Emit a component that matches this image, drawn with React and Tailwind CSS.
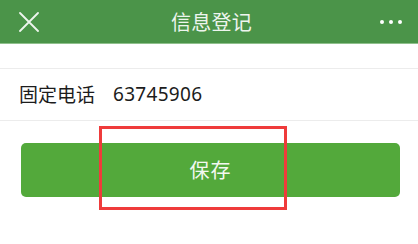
import React from 'react';

export default function App() {
    return (
        <div className="w-[418px] h-[244px] bg-white overflow-hidden" style={{ fontFamily: '"Noto Sans CJK SC", "Noto Sans", sans-serif' }}>
            {/* Top bar */}
            <div className="h-[44px] bg-[#4b9449] border-b border-[#8fc08c] flex items-center justify-between pl-[19px] pr-[16px]">
                <svg className="w-[20px] h-[20px]" viewBox="0 0 20 20" fill="none" stroke="#eef5ee" strokeWidth="1.8" strokeLinecap="round">
                    <path d="M1 1l18 18M19 1L1 19" />
                </svg>
                <div className="text-[20px] text-[#eef5ee] tracking-[0.3px] translate-x-[2px]">信息登记</div>
                <div className="flex gap-[5px] items-center">
                    <span className="w-[4px] h-[4px] rounded-full bg-white" />
                    <span className="w-[4px] h-[4px] rounded-full bg-white" />
                    <span className="w-[4px] h-[4px] rounded-full bg-white" />
                </div>
            </div>

            {/* Form row */}
            <div className="mt-[24px] h-[53px] border-y border-[#ececec] flex items-center px-[19px] gap-[18px] text-[#1c1c1c]">
                <span className="text-[19px]">固定电话</span>
                <span className="text-[19px] tracking-[0.3px]" style={{ fontFamily: '"Noto Sans", sans-serif' }}>63745906</span>
            </div>

            {/* Save button */}
            <div className="relative px-[21px] pt-[22px]">
                <button className="w-[379px] h-[54px] rounded-[5px] bg-[#53a93b] text-[20px] text-[#f2f8f0] tracking-[1px]">
                    保存
                </button>
                <div className="absolute left-[99px] top-[5px] w-[188px] h-[84px] border-[3px] border-[#ef3b3b]" />
            </div>
        </div>
    );
}
